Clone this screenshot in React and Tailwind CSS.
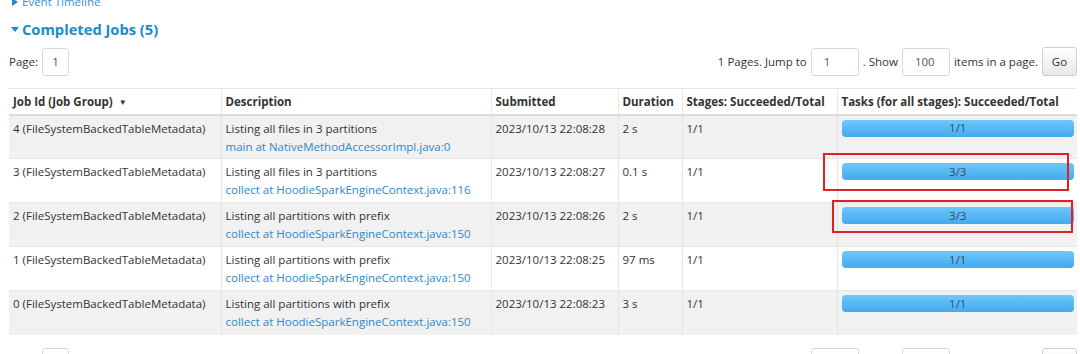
import React from "react";

const rows = [
  { id: "4 (FileSystemBackedTableMetadata)", desc: "Listing all files in 3 partitions", link: "main at NativeMethodAccessorImpl.java:0", sub: "2023/10/13 22:08:28", dur: "2 s", stages: "1/1", tasks: "1/1" },
  { id: "3 (FileSystemBackedTableMetadata)", desc: "Listing all files in 3 partitions", link: "collect at HoodieSparkEngineContext.java:116", sub: "2023/10/13 22:08:27", dur: "0.1 s", stages: "1/1", tasks: "3/3" },
  { id: "2 (FileSystemBackedTableMetadata)", desc: "Listing all partitions with prefix", link: "collect at HoodieSparkEngineContext.java:150", sub: "2023/10/13 22:08:26", dur: "2 s", stages: "1/1", tasks: "3/3" },
  { id: "1 (FileSystemBackedTableMetadata)", desc: "Listing all partitions with prefix", link: "collect at HoodieSparkEngineContext.java:150", sub: "2023/10/13 22:08:25", dur: "97 ms", stages: "1/1", tasks: "1/1" },
  { id: "0 (FileSystemBackedTableMetadata)", desc: "Listing all partitions with prefix", link: "collect at HoodieSparkEngineContext.java:150", sub: "2023/10/13 22:08:23", dur: "3 s", stages: "1/1", tasks: "1/1" },
];

function Box({ w, children }) {
  return (
    <div className={`${w} h-[28px] border border-[#d9d9d9] rounded-[3px] bg-white flex items-center px-[12px] text-[11.5px] text-[#555]`}>
      {children}
    </div>
  );
}

function Pager() {
  return (
    <div className="flex items-center justify-between h-[29px]">
      <div className="flex items-center gap-[4px]">
        <span className="text-[11.5px] text-[#333]">Page:</span>
        <div className="w-[27px] h-[28px] border border-[#d9d9d9] rounded-[3px] bg-white flex items-center justify-center text-[11.5px] text-[#555]">1</div>
      </div>
      <div className="flex items-center text-[11.5px] text-[#333]">
        <span className="mr-[4px]">1 Pages. Jump to</span>
        <Box w="w-[48px]">1</Box>
        <span className="ml-[4px] mr-[4px]">. Show</span>
        <Box w="w-[48px]">100</Box>
        <span className="ml-[4px] mr-[4px]">items in a page.</span>
        <div className="w-[35px] h-[29px] border border-[#cfcfcf] rounded-[3px] bg-gradient-to-b from-[#ffffff] to-[#e8e8e8] flex items-center justify-center text-[11.5px] text-[#333]">Go</div>
      </div>
    </div>
  );
}

export default function App() {
  return (
    <div className="relative w-[1080px] h-[354px] overflow-hidden bg-white pl-[9px] pr-[3px]" style={{ fontFamily: '"Open Sans", "Noto Sans", sans-serif' }}>
      <div className="flex items-center h-[16px] mt-[-6px] pl-[3px] text-[11.5px] text-[#3a8fd0]">
        <svg width="6" height="8" viewBox="0 0 6 8" className="mr-[4px]"><path d="M0 0 L6 4 L0 8 Z" fill="#2d86c9" /></svg>
        <span>Event Timeline</span>
      </div>
      <div className="flex items-center h-[22px] mt-[8px] pl-[2px] text-[14.7px] font-bold text-[#1b8bcd]">
        <svg width="8" height="5" viewBox="0 0 8 5" className="mr-[3px]"><path d="M0 0 L8 0 L4 5 Z" fill="#1b8bcd" /></svg>
        <span>Completed Jobs (5)</span>
      </div>
      <div className="mt-[7px]">
        <Pager />
      </div>
      <table className="mt-[12px] w-[1068px] table-fixed border-collapse text-[11.5px] text-[#333]">
        <colgroup>
          <col className="w-[212px]" />
          <col className="w-[270px]" />
          <col className="w-[127px]" />
          <col className="w-[64px]" />
          <col className="w-[155px]" />
          <col className="w-[240px]" />
        </colgroup>
        <thead>
          <tr className="h-[26px] border-t border-[#e6e6e6] border-b-2 border-b-[#dcdcdc]">
            <th className="text-left font-bold px-[4px] border-r border-[#e6e6e6] whitespace-nowrap">
              Job Id (Job Group) <span className="text-[8px] ml-[3px] align-[1px]">▼</span>
            </th>
            <th className="text-left font-bold px-[4px] border-r border-[#e6e6e6]">Description</th>
            <th className="text-left font-bold px-[4px] border-r border-[#e6e6e6]">Submitted</th>
            <th className="text-left font-bold px-[4px] border-r border-[#e6e6e6]">Duration</th>
            <th className="text-left font-bold px-[4px] border-r border-[#e6e6e6] whitespace-nowrap">Stages: Succeeded/Total</th>
            <th className="text-left font-bold px-[4px] whitespace-nowrap">Tasks (for all stages): Succeeded/Total</th>
          </tr>
        </thead>
        <tbody>
          {rows.map((r, i) => (
            <tr key={i} className={`h-[44px] align-top border-t border-[#e6e6e6] ${i % 2 === 0 ? "bg-[#f1f1f1]" : "bg-white"}`}>
              <td className="px-[4px] pt-[4px] leading-[18px] border-r border-[#e6e6e6] whitespace-nowrap">{r.id}</td>
              <td className="px-[4px] pt-[4px] leading-[18px] border-r border-[#e6e6e6] whitespace-nowrap">
                <div>{r.desc}</div>
                <div className="text-[#2f88c8]">{r.link}</div>
              </td>
              <td className="px-[4px] pt-[4px] leading-[18px] border-r border-[#e6e6e6] whitespace-nowrap">{r.sub}</td>
              <td className="px-[4px] pt-[4px] leading-[18px] border-r border-[#e6e6e6] whitespace-nowrap">{r.dur}</td>
              <td className="px-[4px] pt-[4px] leading-[18px] border-r border-[#e6e6e6]">{r.stages}</td>
              <td className="pl-[4px] pr-[3px] pt-[4px]">
                <div className="h-[17px] rounded-[4px] bg-gradient-to-b from-[#6cc8fc] to-[#43aaee] flex items-center justify-center text-[11.5px] text-[#3a4a5a] leading-none">
                  {r.tasks}
                </div>
              </td>
            </tr>
          ))}
        </tbody>
      </table>
      <div className="mt-[13px]">
        <Pager />
      </div>
      <div className="absolute left-[823px] top-[153px] w-[246px] h-[38px] border-2 border-[#e31e24] pointer-events-none" />
      <div className="absolute left-[832px] top-[200px] w-[241px] h-[33px] border-2 border-[#e31e24] pointer-events-none" />
    </div>
  );
}
